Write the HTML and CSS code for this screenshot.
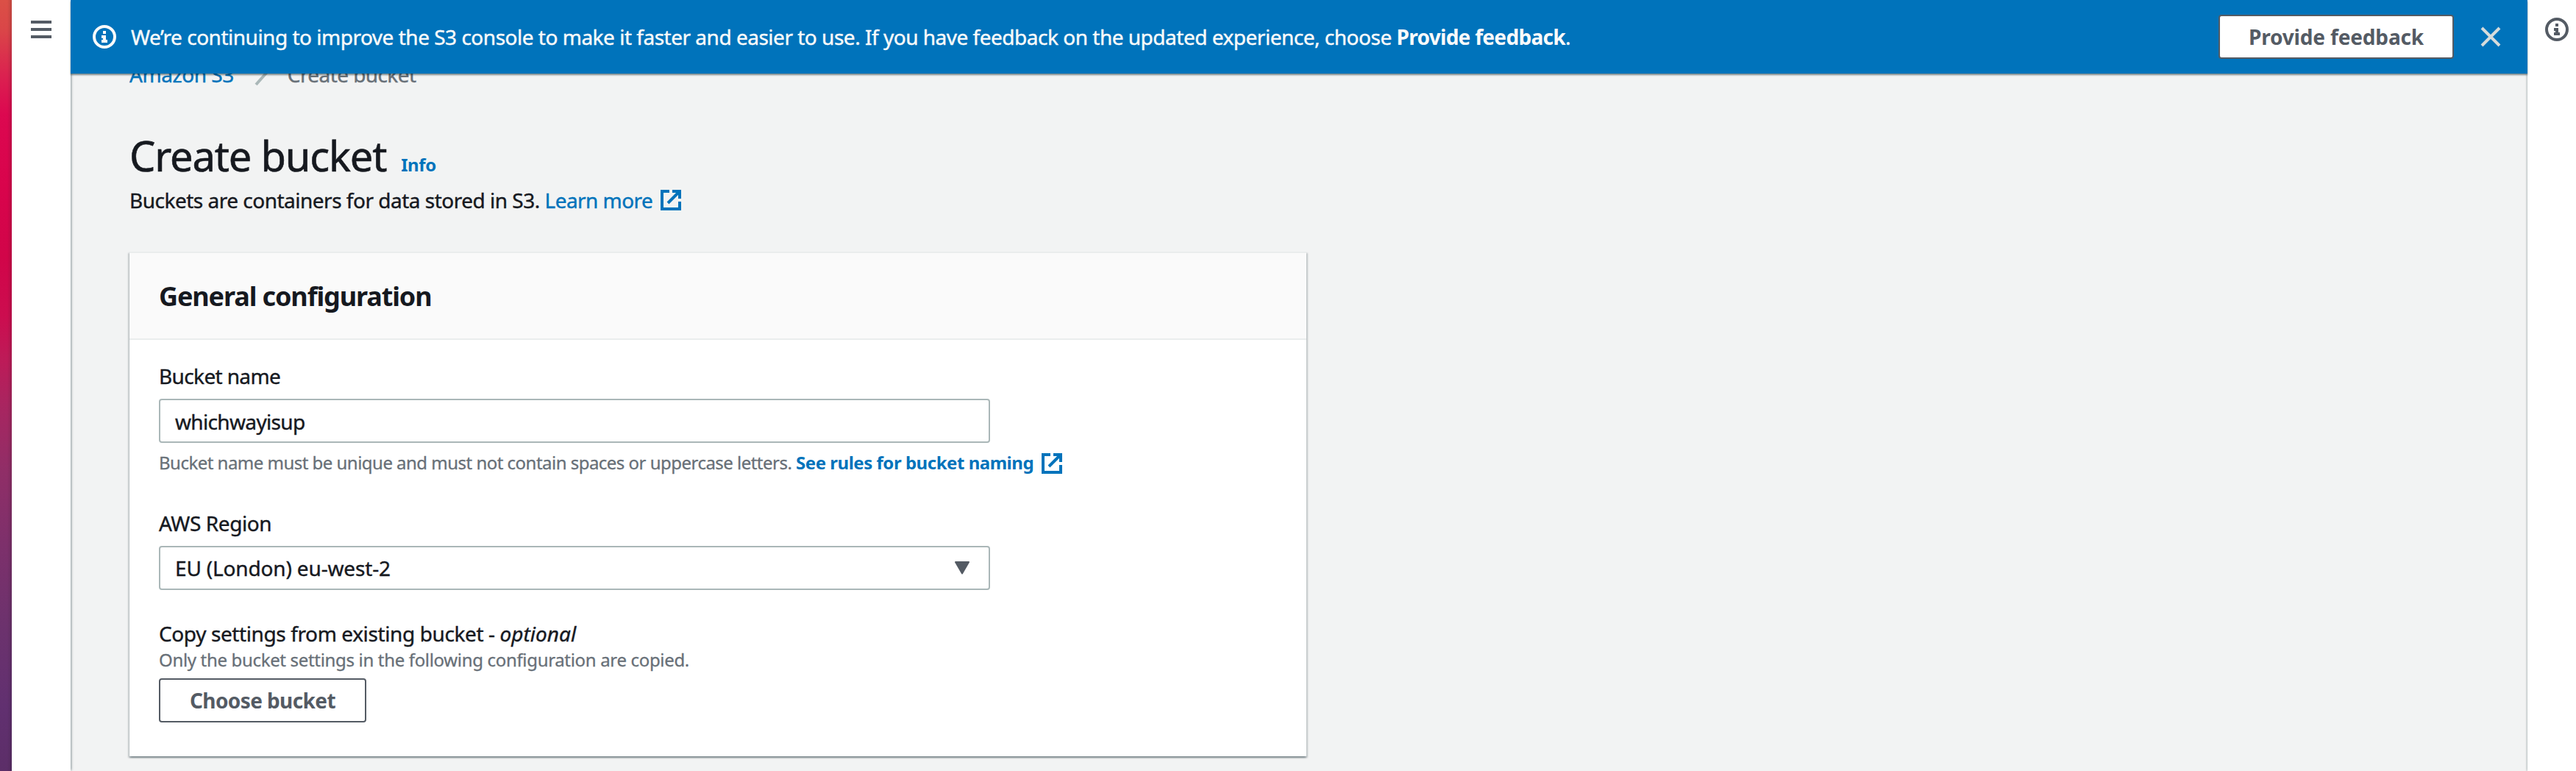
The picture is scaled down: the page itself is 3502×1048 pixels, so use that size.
FILE: index.html
```html
<!DOCTYPE html>
<html lang="en">
<head>
<meta charset="utf-8">
<title>Create bucket</title>
<link rel="stylesheet" href="styles.css">
</head>
<body>
<svg class="sprite" aria-hidden="true">
  <symbol id="info" viewBox="0 0 32 32">
    <circle cx="16" cy="16" r="14" fill="none" stroke="currentColor" stroke-width="4"/>
    <path fill="currentColor" d="M14 8h4v4h-4zM12 14h6v6h2v4h-8v-4h2v-2h-2z"/>
  </symbol>
  <symbol id="external" viewBox="0 0 28 28">
    <path fill="none" stroke="currentColor" stroke-width="4" d="M16 2h10v10M25 3L10 18"/>
    <path fill="none" stroke="currentColor" stroke-width="4" d="M12 2H2v24h24V16"/>
  </symbol>
</svg>
<div class="app">
  <div class="wallpaper"></div>
  <nav class="rail rail-left">
    <svg class="menu" viewBox="0 0 28 24"><path fill="currentColor" d="M0 0h28v4H0zM0 10h28v4H0zM0 20h28v4H0z"/></svg>
  </nav>
  <main class="main">
    <div class="banner">
      <svg class="info-icon"><use href="#info"/></svg>
      <p class="banner-text">We’re continuing to improve the S3 console to make it faster and easier to use. If you have feedback on the updated experience, choose <b>Provide feedback</b>.</p>
      <button class="button feedback">Provide feedback</button>
      <svg class="close" viewBox="0 0 28 28"><path fill="none" stroke="currentColor" stroke-width="4" d="M2 2l24 24M26 2L2 26"/></svg>
    </div>
    <div class="content">
      <div class="crumbs">
        <a class="crumb-link">Amazon S3</a>
        <svg class="slash" viewBox="0 0 20 28"><path fill="none" stroke="currentColor" stroke-width="4" d="M2 26L18 8"/></svg>
        <span class="crumb-current">Create bucket</span>
      </div>
      <div class="title-row"><h1>Create bucket</h1><a class="info-link">Info</a></div>
      <p class="description">Buckets are containers for data stored in S3. <a class="learn">Learn more</a><svg class="external"><use href="#external"/></svg></p>
      <section class="card">
        <header class="card-header"><h2>General configuration</h2></header>
        <div class="card-body">
          <div class="field">
            <label class="label">Bucket name</label>
            <div class="control"><span class="name-value">whichwayisup</span></div>
            <p class="hint">Bucket name must be unique and must not contain spaces or uppercase letters. <a class="rules">See rules for bucket naming</a><svg class="external"><use href="#external"/></svg></p>
          </div>
          <div class="field region">
            <label class="label region-label">AWS Region</label>
            <div class="control select"><span class="region-value">EU (London) eu-west-2</span>
              <svg class="caret" viewBox="0 0 20 18"><path fill="currentColor" stroke="currentColor" stroke-width="2" stroke-linejoin="round" d="M1 1h18l-9 15.500z"/></svg></div>
          </div>
          <div class="field copy">
            <label class="label copy-label">Copy settings from existing bucket - <i>optional</i></label>
            <p class="hint copy-hint">Only the bucket settings in the following configuration are copied.</p>
            <button class="button choose">Choose bucket</button>
          </div>
        </div>
      </section>
    </div>
  </main>
  <aside class="rail rail-right"><svg class="info-icon"><use href="#info"/></svg></aside>
</div>
</body>
</html>
```
FILE: styles.css
```css
* { box-sizing: border-box; }
body {
  margin: 0;
  background: #f2f3f3;
  color: #16191f;
  font: 28px/32px "Noto Sans", sans-serif;
  -webkit-text-stroke: .4px currentColor;
}
h1, h2, p { margin: 0; }
a { color: #0073bb; -webkit-text-stroke-color: #0073bb; }
p, h1, h2, label, span, a, button { white-space: nowrap; }
svg { flex: none; }
.sprite { display: none; }

.app { display: flex; height: 1048px; overflow: hidden; }
.wallpaper {
  width: 16px;
  background:
    linear-gradient(90deg, transparent 10px, rgba(0, 0, 0, .14)),
    linear-gradient(#db5046 0, #da4648 40px, #db2050 105px, #dc0850 155px, #d9044c 250px, #d10549 350px, #cc0d4f 430px, #bd1b58 490px, #a92560 550px, #902e67 640px, #7d306b 740px, #6c326d 850px, #613070 960px, #5c2e68 1048px);
}
.rail {
  z-index: 2;
  flex: none;
  background: #fff;
  color: #545b64;
  box-shadow: 0 0 3px rgba(0, 28, 36, .5);
}
.rail-left { width: 80px; padding: 28px 26px; box-shadow: 2px 0 3px -1px rgba(0, 28, 36, .45); }
.rail-right { width: 66px; padding: 24px; }
.menu { display: block; width: 28px; height: 24px; }
.info-icon { display: block; width: 32px; height: 32px; }

.main { flex: 1; min-width: 0; }
.banner {
  position: relative;
  z-index: 3;
  display: flex;
  align-items: center;
  height: 100px;
  padding: 0 36px 0 30px;
  background: #0073bb;
  color: #fafafa;
  box-shadow: 0 2px 2px rgba(0, 28, 36, .5);
  -webkit-text-stroke-color: #fafafa;
}
.banner-text { flex: 1; margin-left: 20px; padding-bottom: 1px; letter-spacing: -.49px; }
.banner-text b { letter-spacing: -.7px; -webkit-text-stroke-width: 0; }
.button {
  height: 60px;
  padding: 0 0 2px;
  border: 2px solid #545b64;
  border-radius: 4px;
  background: #fff;
  color: #545b64;
  font: bold 28px/56px "Noto Sans", sans-serif;
  -webkit-text-stroke-width: 0;
}
.feedback { width: 320px; letter-spacing: -.16px; }
.close { width: 28px; height: 28px; margin-left: 36px; color: #d5dbdb; }

.content { padding: 0 80px; }
.crumbs { display: flex; align-items: center; height: 44px; margin-top: -21px; }
.crumb-link { letter-spacing: -.45px; }
.slash { width: 20px; height: 28px; margin: 4px 25px 0 28px; color: #aab7b8; }
.crumb-current { color: #687078; letter-spacing: -.58px; -webkit-text-stroke-color: #687078; }
.title-row { display: flex; align-items: baseline; margin-top: 53px; line-height: 70px; }
h1 { font-size: 56px; font-weight: 400; line-height: 70px; letter-spacing: -1.17px; -webkit-text-stroke-width: .6px; }
.info-link { margin-left: 20px; font-size: 24px; font-weight: 700; line-height: 32px; letter-spacing: -.4px; -webkit-text-stroke-width: 0; }
.description { display: flex; align-items: center; height: 44px; margin-top: 4px; letter-spacing: -.5px; white-space: pre; }
.learn { letter-spacing: -.55px; }
.external { width: 28px; height: 28px; margin-left: 11px; color: #0073bb; }

.card {
  width: 1600px;
  height: 686px;
  margin-top: 48px;
  border-top: 2px solid #eaeded;
  background: #fff;
  box-shadow: 0 2px 2px rgba(0, 28, 36, .3), 2px 2px 2px rgba(0, 28, 36, .15), -2px 2px 2px rgba(0, 28, 36, .15);
}
.card-header { padding: 29px 40px 27px; border-bottom: 2px solid #eaeded; background: #fafafa; }
h2 { font-size: 36px; font-weight: 700; line-height: 60px; letter-spacing: -1.12px; -webkit-text-stroke-width: 0; }
.card-body { padding: 33px 40px 0; }
.label { display: block; letter-spacing: -.63px; }
.control {
  display: flex;
  align-items: center;
  width: 1130px;
  height: 60px;
  margin-top: 15px;
  padding: 2px 20px 0;
  border: 2px solid #aab7b8;
  border-radius: 4px;
}
.name-value { letter-spacing: -.66px; }
.hint { display: flex; align-items: center; height: 32px; margin-top: 11px; color: #687078; font-size: 24px; letter-spacing: -.52px; white-space: pre; -webkit-text-stroke: .3px #687078; }
.rules { font-weight: 700; letter-spacing: -.47px; -webkit-text-stroke-width: 0; }
.hint .external { margin-top: 2px; }
.region { margin-top: 50px; }
.region-label { letter-spacing: -.42px; }
.region-value { letter-spacing: -.16px; }
.select { justify-content: space-between; padding: 0 26px 0 20px; }
.caret { width: 20px; height: 18px; color: #545b64; }
.copy { margin-top: 43px; }
.copy-label { letter-spacing: -.39px; }
.copy-label i { letter-spacing: 0; }
.copy-hint { margin-top: 4px; letter-spacing: -.33px; }
.choose { display: block; width: 282px; margin-top: 9px; letter-spacing: -.6px; }
```
